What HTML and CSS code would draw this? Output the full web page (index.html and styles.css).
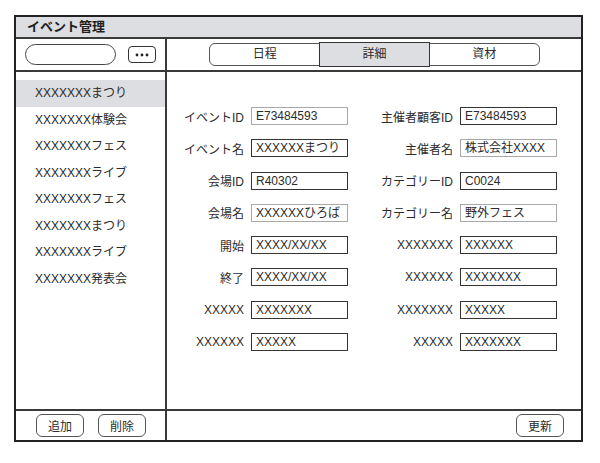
FILE: index.html
```html
<!DOCTYPE html>
<html lang="ja">
<head>
    <meta charset="UTF-8">
    <meta name="viewport" content="width=device-width, initial-scale=1.0">
    <title>イベント管理</title>
    <link rel="stylesheet" href="styles.css">
</head>
<body>
    <div class="window">
        <div class="title-bar">イベント管理</div>

        <div class="app">
            <!-- left column -->
            <div class="side-tools">
                <div class="search-box"></div>
                <div class="more-btn">
                    <svg width="14" height="4" viewBox="0 0 14 4">
                        <circle cx="2" cy="2" r="1.4" fill="#222"/>
                        <circle cx="7" cy="2" r="1.4" fill="#222"/>
                        <circle cx="12" cy="2" r="1.4" fill="#222"/>
                    </svg>
                </div>
            </div>

            <!-- tabs -->
            <div class="main-tools">
                <div class="tabs">
                    <span class="tab">日程</span>
                    <span class="tab active">詳細</span>
                    <span class="tab">資材</span>
                </div>
            </div>

            <ul class="event-list">
                <li class="selected">XXXXXXXまつり</li>
                <li>XXXXXXX体験会</li>
                <li>XXXXXXXフェス</li>
                <li>XXXXXXXライブ</li>
                <li>XXXXXXXフェス</li>
                <li>XXXXXXXまつり</li>
                <li>XXXXXXXライブ</li>
                <li>XXXXXXX発表会</li>
            </ul>

            <div class="detail">
                <div class="form-grid">
                    <label>イベントID</label>
                    <div class="field readonly">E73484593</div>
                    <label>主催者顧客ID</label>
                    <div class="field">E73484593</div>

                    <label>イベント名</label>
                    <div class="field">XXXXXXまつり</div>
                    <label>主催者名</label>
                    <div class="field readonly">株式会社XXXX</div>

                    <label>会場ID</label>
                    <div class="field">R40302</div>
                    <label>カテゴリーID</label>
                    <div class="field">C0024</div>

                    <label>会場名</label>
                    <div class="field readonly">XXXXXXひろば</div>
                    <label>カテゴリー名</label>
                    <div class="field readonly">野外フェス</div>

                    <label>開始</label>
                    <div class="field">XXXX/XX/XX</div>
                    <label>XXXXXXX</label>
                    <div class="field">XXXXXX</div>

                    <label>終了</label>
                    <div class="field">XXXX/XX/XX</div>
                    <label>XXXXXX</label>
                    <div class="field">XXXXXXX</div>

                    <label>XXXXX</label>
                    <div class="field">XXXXXXX</div>
                    <label>XXXXXXX</label>
                    <div class="field">XXXXX</div>

                    <label>XXXXXX</label>
                    <div class="field">XXXXX</div>
                    <label>XXXXX</label>
                    <div class="field">XXXXXXX</div>
                </div>
            </div>

            <div class="side-footer">
                <button class="btn">追加</button>
                <button class="btn">削除</button>
            </div>

            <div class="main-footer">
                <button class="btn">更新</button>
            </div>
        </div>
    </div>
</body>
</html>
```

FILE: styles.css
```css
body {
    font-family: 'Liberation Sans', 'Noto Sans CJK JP', sans-serif;
    margin: 0;
    background-color: white;
    color: #2b2b2b;
}

.window {
    margin: 15px 0 0 14px;
    width: 569px;
    height: 427px;
    box-sizing: border-box;
    border: 2px solid #222;
    display: flex;
    flex-direction: column;
}

.title-bar {
    height: 20px;
    line-height: 20px;
    padding-left: 11px;
    background-color: #dcdee1;
    border-bottom: 2px solid #3a3a3a;
    font-size: 13px;
    font-weight: bold;
    color: #1e1e1e;
}

.app {
    flex: 1;
    display: grid;
    grid-template-columns: 151px 1fr;
    grid-template-rows: 33px 1fr 31px;
}

/* toolbar row */
.side-tools {
    display: flex;
    align-items: center;
    gap: 12px;
    padding-left: 9px;
    border-right: 2px solid #3a3a3a;
    border-bottom: 2px solid #3a3a3a;
}

.search-box {
    width: 89px;
    height: 19px;
    border: 1px solid #444;
    border-radius: 11px;
}

.more-btn {
    width: 26px;
    height: 15px;
    border: 1px solid #333;
    border-radius: 4px;
    display: flex;
    align-items: center;
    justify-content: center;
}

.main-tools {
    display: flex;
    align-items: center;
    padding-left: 42px;
    border-bottom: 2px solid #3a3a3a;
}

.tabs {
    display: flex;
    width: 331px;
    height: 23px;
    box-sizing: border-box;
    border: 1px solid #555;
    border-radius: 6px;
}

.tab {
    flex: 1;
    text-align: center;
    font-size: 12px;
    line-height: 21px;
}

.tab.active {
    background-color: #dcdee1;
    outline: 1px solid #333;
    margin: -1px 0;
    line-height: 23px;
}

/* event list */
.event-list {
    list-style: none;
    margin: 0;
    padding: 8px 0 0 0;
    border-right: 2px solid #3a3a3a;
}

.event-list li {
    height: 26.5px;
    line-height: 26px;
    padding-left: 19px;
    font-size: 12px;
}

.event-list li.selected {
    background-color: #dcdee1;
}

/* detail form */
.detail {
    padding: 35px 0 0 10px;
}

.form-grid {
    display: grid;
    grid-template-columns: 67px 97px 98px 97px;
    column-gap: 7px;
    row-gap: 14.3px;
    align-items: center;
}

.form-grid label {
    text-align: right;
    font-size: 12px;
    white-space: nowrap;
}

.field {
    height: 18px;
    box-sizing: border-box;
    border: 1px solid #333;
    padding-left: 4px;
    font-size: 12px;
    line-height: 16px;
    white-space: nowrap;
    overflow: hidden;
}

.field.readonly {
    border-color: #a8a8a8;
}

/* footer */
.side-footer {
    display: flex;
    align-items: center;
    gap: 14px;
    padding-left: 20px;
    border-right: 2px solid #3a3a3a;
    border-top: 2px solid #3a3a3a;
}

.main-footer {
    display: flex;
    align-items: center;
    justify-content: flex-end;
    padding-right: 17px;
    border-top: 2px solid #3a3a3a;
}

.btn {
    width: 48px;
    height: 23px;
    padding: 0;
    background: white;
    border: 1px solid #555;
    border-radius: 6px;
    font-family: inherit;
    font-size: 12px;
    color: #2b2b2b;
}
```
